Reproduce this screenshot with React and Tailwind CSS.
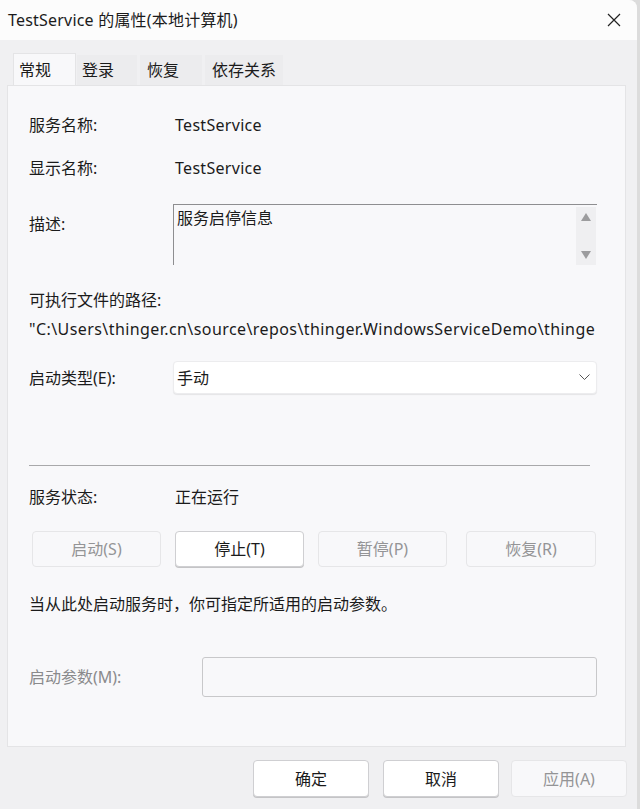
import React from "react";

const font = { fontFamily: '"Noto Sans", "Noto Sans CJK SC", sans-serif' };

function Btn({ children, disabled, className = "" }) {
  return (
    <button
      type="button"
      className={`flex items-center justify-center rounded-[4px] border text-[16px] ${
        disabled
          ? "border-[#e6e6e8] bg-[#f8f8fa] text-[#949496]"
          : "border-[#cfcfd2] bg-white text-[#1b1b1b] shadow-[0_1px_0_#c4c4c6]"
      } ${className}`}
    >
      {children}
    </button>
  );
}

export default function App() {
  return (
    <div className="flex h-[809px] w-[640px] overflow-hidden bg-[#dcdcdc] text-[#1b1b1b]" style={font}>
      <div className="flex w-[637px] flex-col overflow-hidden rounded-tr-[8px] bg-[#f0f0f2]">
        {/* title bar */}
        <div className="flex h-[40px] items-center justify-between bg-[#fcfcfc] pl-[8px] pr-[16px]">
          <span className="text-[16px] tracking-[0.2px]">TestService 的属性(本地计算机)</span>
          <svg width="14" height="14" viewBox="0 0 14 14" className="text-[#222]">
            <path d="M1 1 L13 13 M13 1 L1 13" stroke="currentColor" strokeWidth="1.2" />
          </svg>
        </div>

        {/* tabs */}
        <div className="mt-[13px] flex items-end pl-[13px] text-[16px]">
          <div className="flex h-[32px] w-[63px] items-center border-x border-t border-[#e4e4e6] bg-[#f8f8fa] pl-[5px]">常规</div>
          <div className="ml-[1px] flex h-[30px] w-[60px] items-center bg-[#ececee] pl-[5px]">登录</div>
          <div className="ml-[3px] flex h-[30px] w-[62px] items-center bg-[#ececee] pl-[7px]">恢复</div>
          <div className="ml-[3px] flex h-[30px] w-[78px] items-center bg-[#ececee] pl-[7px]">依存关系</div>
        </div>

        {/* panel */}
        <div className="ml-[7px] mr-[11px] flex h-[662px] flex-col border border-[#e4e4e6] bg-[#f8f8fa] pl-[21px] pr-[28px] pt-[17px] text-[16px]">
          <div className="flex h-[43px] items-center">
            <span className="w-[146px]">服务名称:</span>
            <span className="tracking-[0.3px]">TestService</span>
          </div>
          <div className="flex h-[43px] items-center">
            <span className="w-[146px]">显示名称:</span>
            <span className="tracking-[0.3px]">TestService</span>
          </div>

          <div className="mt-[15px] flex items-start">
            <span className="w-[144px] pt-[8px]">描述:</span>
            <div className="flex h-[61px] flex-1 border-l border-t border-[#8e8e90] bg-[#f8f8fa]">
              <div className="flex-1 pl-[3px] pt-[1px]">服务启停信息</div>
              <div className="mr-[1px] mt-[2px] flex w-[20px] flex-col items-center justify-between bg-[#efeff1] py-[6px]">
                <svg width="10" height="8" viewBox="0 0 10 8"><path d="M5 0 L10 8 L0 8 Z" fill="#9c9c9e" /></svg>
                <svg width="10" height="8" viewBox="0 0 10 8"><path d="M0 0 L10 0 L5 8 Z" fill="#9c9c9e" /></svg>
              </div>
            </div>
          </div>

          <div className="mt-[23px] leading-[24px]">可执行文件的路径:</div>
          <div className="mt-[5px] whitespace-nowrap leading-[24px] tracking-[0.42px]">
            "C:\Users\thinger.cn\source\repos\thinger.WindowsServiceDemo\thinge
          </div>

          <div className="mt-[20px] flex items-center">
            <span className="w-[144px]">启动类型(E):</span>
            <div className="flex h-[33px] flex-1 items-center justify-between rounded-[4px] border border-[#ececee] bg-white pl-[3px] pr-[6px] shadow-[0_1px_1px_rgba(0,0,0,0.08)]">
              <span>手动</span>
              <svg width="11" height="7" viewBox="0 0 11 7"><path d="M0.5 0.5 L5.5 5.5 L10.5 0.5" fill="none" stroke="#555" strokeWidth="1" /></svg>
            </div>
          </div>

          <div className="mt-[71px] mr-[7px] h-[1px] bg-[#a8a8aa]" />

          <div className="mt-[19px] flex items-center leading-[24px]">
            <span className="w-[146px]">服务状态:</span>
            <span>正在运行</span>
          </div>

          <div className="mt-[22px] flex gap-[14px] pl-[3px]">
            <Btn disabled className="h-[36px] w-[129px]">启动(S)</Btn>
            <Btn className="h-[36px] w-[129px]">停止(T)</Btn>
            <Btn disabled className="h-[36px] w-[129px]">暂停(P)</Btn>
            <Btn disabled className="ml-[5px] h-[36px] w-[130px]">恢复(R)</Btn>
          </div>

          <div className="mt-[25px] leading-[24px]">当从此处启动服务时，你可指定所适用的启动参数。</div>

          <div className="mt-[41px] flex items-center">
            <span className="w-[173px] text-[#8a8a8c]">启动参数(M):</span>
            <div className="h-[40px] flex-1 rounded-[3px] border border-[#c8c8ca] bg-[#f8f8fa]" />
          </div>
        </div>

        {/* footer */}
        <div className="flex justify-end gap-[14px] pr-[10px] pt-[13px]">
          <Btn className="h-[37px] w-[116px]">确定</Btn>
          <Btn className="h-[37px] w-[116px]">取消</Btn>
          <Btn disabled className="-ml-[2px] h-[37px] w-[116px]">应用(A)</Btn>
        </div>
      </div>
    </div>
  );
}
